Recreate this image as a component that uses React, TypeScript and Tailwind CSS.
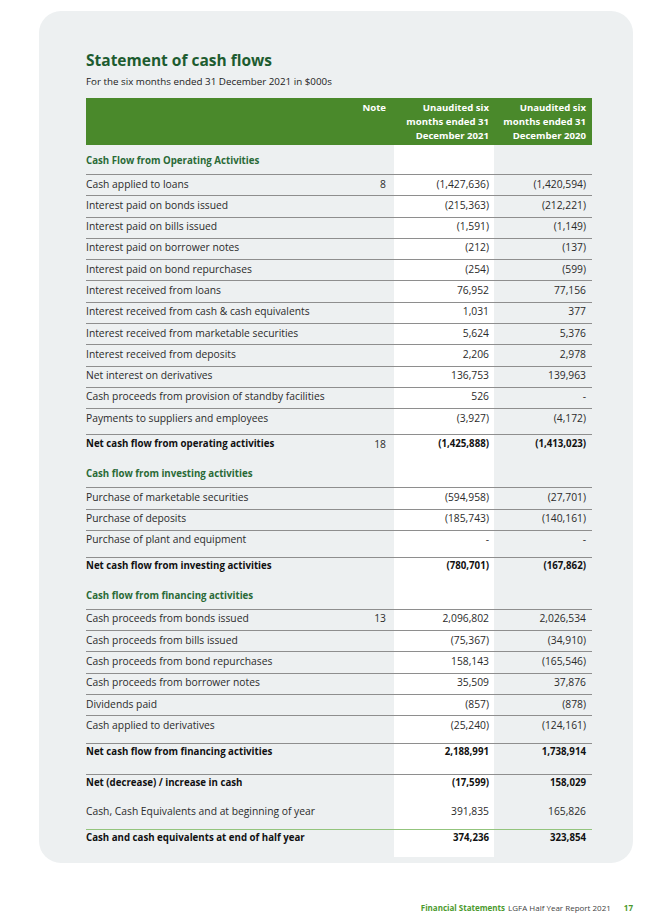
import React from "react";

type Kind = "heading" | "data" | "total" | "plain";

interface Line {
  label: string;
  note?: string;
  a?: string;
  b?: string;
  kind: Kind;
  h: string; // height class
  rule: "gray" | "green" | "none";
}

const lines: Line[] = [
  { label: "Cash Flow from Operating Activities", kind: "heading", h: "h-[29px]", rule: "none" },
  { label: "Cash applied to loans", note: "8", a: "(1,427,636)", b: "(1,420,594)", kind: "data", h: "h-[21.3px]", rule: "gray" },
  { label: "Interest paid on bonds issued", a: "(215,363)", b: "(212,221)", kind: "data", h: "h-[21.3px]", rule: "gray" },
  { label: "Interest paid on bills issued", a: "(1,591)", b: "(1,149)", kind: "data", h: "h-[21.3px]", rule: "gray" },
  { label: "Interest paid on borrower notes", a: "(212)", b: "(137)", kind: "data", h: "h-[21.3px]", rule: "gray" },
  { label: "Interest paid on bond repurchases", a: "(254)", b: "(599)", kind: "data", h: "h-[21.3px]", rule: "gray" },
  { label: "Interest received from loans", a: "76,952", b: "77,156", kind: "data", h: "h-[21.3px]", rule: "gray" },
  { label: "Interest received from cash & cash equivalents", a: "1,031", b: "377", kind: "data", h: "h-[21.3px]", rule: "gray" },
  { label: "Interest received from marketable securities", a: "5,624", b: "5,376", kind: "data", h: "h-[21.3px]", rule: "gray" },
  { label: "Interest received from deposits", a: "2,206", b: "2,978", kind: "data", h: "h-[21.3px]", rule: "gray" },
  { label: "Net interest on derivatives", a: "136,753", b: "139,963", kind: "data", h: "h-[21.3px]", rule: "gray" },
  { label: "Cash proceeds from provision of standby facilities", a: "526", b: "-", kind: "data", h: "h-[21.3px]", rule: "gray" },
  { label: "Payments to suppliers and employees", a: "(3,927)", b: "(4,172)", kind: "data", h: "h-[26px]", rule: "gray" },
  { label: "Net cash flow from operating activities", note: "18", a: "(1,425,888)", b: "(1,413,023)", kind: "total", h: "h-[24px]", rule: "gray" },

  { label: "Cash flow from investing activities", kind: "heading", h: "h-[29px]", rule: "none" },
  { label: "Purchase of marketable securities", a: "(594,958)", b: "(27,701)", kind: "data", h: "h-[21.3px]", rule: "gray" },
  { label: "Purchase of deposits", a: "(185,743)", b: "(140,161)", kind: "data", h: "h-[21.3px]", rule: "gray" },
  { label: "Purchase of plant and equipment", a: "-", b: "-", kind: "data", h: "h-[27px]", rule: "gray" },
  { label: "Net cash flow from investing activities", a: "(780,701)", b: "(167,862)", kind: "total", h: "h-[23px]", rule: "gray" },

  { label: "Cash flow from financing activities", kind: "heading", h: "h-[29px]", rule: "none" },
  { label: "Cash proceeds from bonds issued", note: "13", a: "2,096,802", b: "2,026,534", kind: "data", h: "h-[21.3px]", rule: "gray" },
  { label: "Cash proceeds from bills issued", a: "(75,367)", b: "(34,910)", kind: "data", h: "h-[21.3px]", rule: "gray" },
  { label: "Cash proceeds from bond repurchases", a: "158,143", b: "(165,546)", kind: "data", h: "h-[21.3px]", rule: "gray" },
  { label: "Cash proceeds from borrower notes", a: "35,509", b: "37,876", kind: "data", h: "h-[21.3px]", rule: "gray" },
  { label: "Dividends paid", a: "(857)", b: "(878)", kind: "data", h: "h-[21.3px]", rule: "gray" },
  { label: "Cash applied to derivatives", a: "(25,240)", b: "(124,161)", kind: "data", h: "h-[27.5px]", rule: "gray" },
  { label: "Net cash flow from financing activities", a: "2,188,991", b: "1,738,914", kind: "total", h: "h-[31px]", rule: "gray" },

  { label: "Net (decrease) / increase in cash", a: "(17,599)", b: "158,029", kind: "total", h: "h-[27px]", rule: "gray" },
  { label: "Cash, Cash Equivalents and at beginning of year", a: "391,835", b: "165,826", kind: "plain", h: "h-[28px]", rule: "none" },
  { label: "Cash and cash equivalents at end of half year", a: "374,236", b: "323,854", kind: "total", h: "h-[28px]", rule: "green" },
];

const cols = "grid grid-cols-[259px_49px_100px_98px]";

function Row({ line }: { line: Line }) {
  const ruleCls =
    line.rule === "gray"
      ? "border-t-[1.5px] border-[#8e8e8e]"
      : line.rule === "green"
      ? "border-t-[1.5px] border-[#93c47d]"
      : "";
  const pad = line.kind === "heading" ? "pt-[9px]" : line.rule === "none" ? "pt-[3px]" : "pt-[1.5px]";
  const text =
    line.kind === "heading"
      ? "font-bold text-[9.7px] text-[#2a6a37]"
      : line.kind === "total"
      ? "font-bold text-[9.7px] text-[#111]"
      : "text-[10.3px] text-[#2b2b2b]";

  return (
    <div className={`${cols} ${line.h} ${ruleCls} leading-[14px]`}>
      <div className={`${pad} ${text} whitespace-nowrap`}>{line.label}</div>
      <div className={`${pad} text-[10.3px] text-[#2b2b2b] text-right pr-[8px]`}>{line.note}</div>
      <div className={`${pad} ${text} text-right pr-[5px] bg-white`}>{line.a}</div>
      <div className={`${pad} ${text} text-right pr-[6px]`}>{line.b}</div>
    </div>
  );
}

export default function App() {
  return (
    <div
      className="min-h-[919px] w-[645px] bg-white pt-[11px]"
      style={{ fontFamily: "'Open Sans', 'Noto Sans', sans-serif" }}
    >
      <div className="ml-[39px] w-[594px] rounded-[22px] bg-[#edf0f1] pl-[47px] pt-[39px] pb-[6px]">
        <h1 className="text-[15.5px] leading-[20px] font-bold text-[#1d5c30]">
          Statement of cash flows
        </h1>
        <p className="mt-[5px] text-[9.8px] leading-[14px] text-[#222]">
          For the six months ended 31 December 2021 in $000s
        </p>

        <div className="mt-[9px] w-[506px]">
          <div className={`${cols} h-[47px] bg-[#4a892b] pt-[3px] text-[9.6px] leading-[14px] font-bold text-white`}>
            <div />
            <div className="text-right pr-[8px]">Note</div>
            <div className="text-right pr-[5px]">
              Unaudited six
              <br />
              months ended 31
              <br />
              December 2021
            </div>
            <div className="text-right pr-[6px]">
              Unaudited six
              <br />
              months ended 31
              <br />
              December 2020
            </div>
          </div>
          {lines.map((l, i) => (
            <Row key={i} line={l} />
          ))}
        </div>
      </div>

      {/* footer */}
      <div className="mt-[38px] flex justify-end pr-[12px] text-[8px] leading-[14px]">
        <span className="font-bold text-[#4c9a2e]">Financial Statements</span>
        <span className="ml-[3px] text-[#444]">LGFA Half Year Report 2021</span>
        <span className="ml-[13px] font-bold text-[#4c9a2e]">17</span>
      </div>
    </div>
  );
}
